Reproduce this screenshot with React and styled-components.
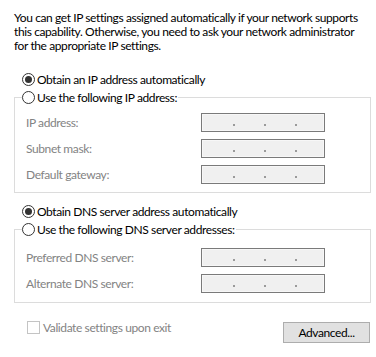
import React from 'react'
import styled, { createGlobalStyle } from 'styled-components'

const GlobalStyle = createGlobalStyle`
  html, body {
    margin: 0;
    padding: 0;
    background: #ffffff;
  }
  body {
    font-family: Lato, "Segoe UI", sans-serif;
    font-size: 12px;
    letter-spacing: -0.4px;
    color: #000000;
  }
`

function Radio({ checked, children }) {
  return (
    <RadioRow>
      <RadioCircle>{checked && <RadioDot />}</RadioCircle>
      <span>{children}</span>
    </RadioRow>
  )
}

function IpBox() {
  return (
    <IpField>
      <Dot />
      <Dot />
      <Dot />
    </IpField>
  )
}

function Group({ legend, rows, top, bottom }) {
  return (
    <GroupBox>
      <Legend>
        <Radio>{legend}</Radio>
      </Legend>
      <GroupBody $top={top} $bottom={bottom}>
        {rows.map((label) => (
          <React.Fragment key={label}>
            <FieldLabel>{label}</FieldLabel>
            <IpBox />
          </React.Fragment>
        ))}
      </GroupBody>
    </GroupBox>
  )
}

function App() {
  return (
    <Page>
      <GlobalStyle />
      <Content>
        <Intro>
          You can get IP settings assigned automatically if your network supports<br />
          this capability. Otherwise, you need to ask your network administrator<br />
          for the appropriate IP settings.
        </Intro>

        <AutoOption $gap={17}>
          <Radio checked>Obtain an IP address automatically</Radio>
        </AutoOption>
        <Group
          legend="Use the following IP address:"
          rows={['IP address:', 'Subnet mask:', 'Default gateway:']}
          top={7}
          bottom={8}
        />

        <AutoOption $gap={9}>
          <Radio checked>Obtain DNS server address automatically</Radio>
        </AutoOption>
        <Group
          legend="Use the following DNS server addresses:"
          rows={['Preferred DNS server:', 'Alternate DNS server:']}
          top={10}
          bottom={9}
        />

        <Footer>
          <CheckRow>
            <CheckBox />
            <span>Validate settings upon exit</span>
          </CheckRow>
          <Button>Advanced...</Button>
        </Footer>
      </Content>
      <Separator />
    </Page>
  )
}

export default App

const Page = styled.div`
  width: 376px;
  height: 357px;
  overflow: hidden;
`

const Content = styled.div`
  padding: 11px 5px 0 14px;
`

const Intro = styled.p`
  margin: 0;
  line-height: 14px;
  white-space: nowrap;
`

const AutoOption = styled.div`
  margin-top: ${(p) => p.$gap}px;
  padding-left: 8px;
`

const RadioRow = styled.div`
  display: flex;
  align-items: center;
  height: 18px;
  gap: 2px;
  white-space: nowrap;
`

const RadioCircle = styled.span`
  box-sizing: border-box;
  width: 13px;
  height: 13px;
  border: 1px solid #333333;
  border-radius: 50%;
  display: flex;
  align-items: center;
  justify-content: center;
  background: #ffffff;
  flex: none;
`

const RadioDot = styled.span`
  width: 7px;
  height: 7px;
  border-radius: 50%;
  background: #333333;
`

const GroupBox = styled.fieldset`
  margin: 0;
  padding: 0;
  border: 1px solid #dcdcdc;
  min-width: 0;
`

const Legend = styled.legend`
  margin-left: 7px;
  padding: 0 1px 0 0;
`

const GroupBody = styled.div`
  display: grid;
  grid-template-columns: 175px 124px;
  row-gap: 7px;
  align-items: center;
  padding: ${(p) => p.$top}px 0 ${(p) => p.$bottom}px 11px;
`

const FieldLabel = styled.span`
  color: #838383;
  line-height: 19px;
`

const IpField = styled.div`
  box-sizing: border-box;
  height: 19px;
  border: 1px solid #7a7a7a;
  background: #f0f0f0;
  box-shadow: inset 0 0 0 1px #f7f7f7;
  display: flex;
  align-items: flex-end;
  gap: 29px;
  padding: 0 0 5px 31px;
`

const Dot = styled.span`
  width: 2px;
  height: 2px;
  background: #9a9a9a;
`

const Footer = styled.div`
  display: flex;
  justify-content: space-between;
  align-items: flex-start;
  margin-top: 18px;
  padding-left: 13px;
`

const CheckRow = styled.div`
  display: flex;
  align-items: center;
  gap: 3px;
  height: 13px;
  color: #838383;
  white-space: nowrap;
`

const CheckBox = styled.span`
  box-sizing: border-box;
  width: 13px;
  height: 13px;
  border: 1px solid #c4c4c4;
  background: #ffffff;
  flex: none;
`

const Button = styled.button`
  box-sizing: border-box;
  margin-top: 1px;
  margin-right: 1px;
  width: 87px;
  height: 21px;
  padding: 0;
  border: 1px solid #adadad;
  background: #e1e1e1;
  font-family: inherit;
  font-size: 12px;
  letter-spacing: inherit;
  color: #000000;
`

const Separator = styled.div`
  margin-top: 15px;
  height: 1px;
  background: #dfdfdf;
`
